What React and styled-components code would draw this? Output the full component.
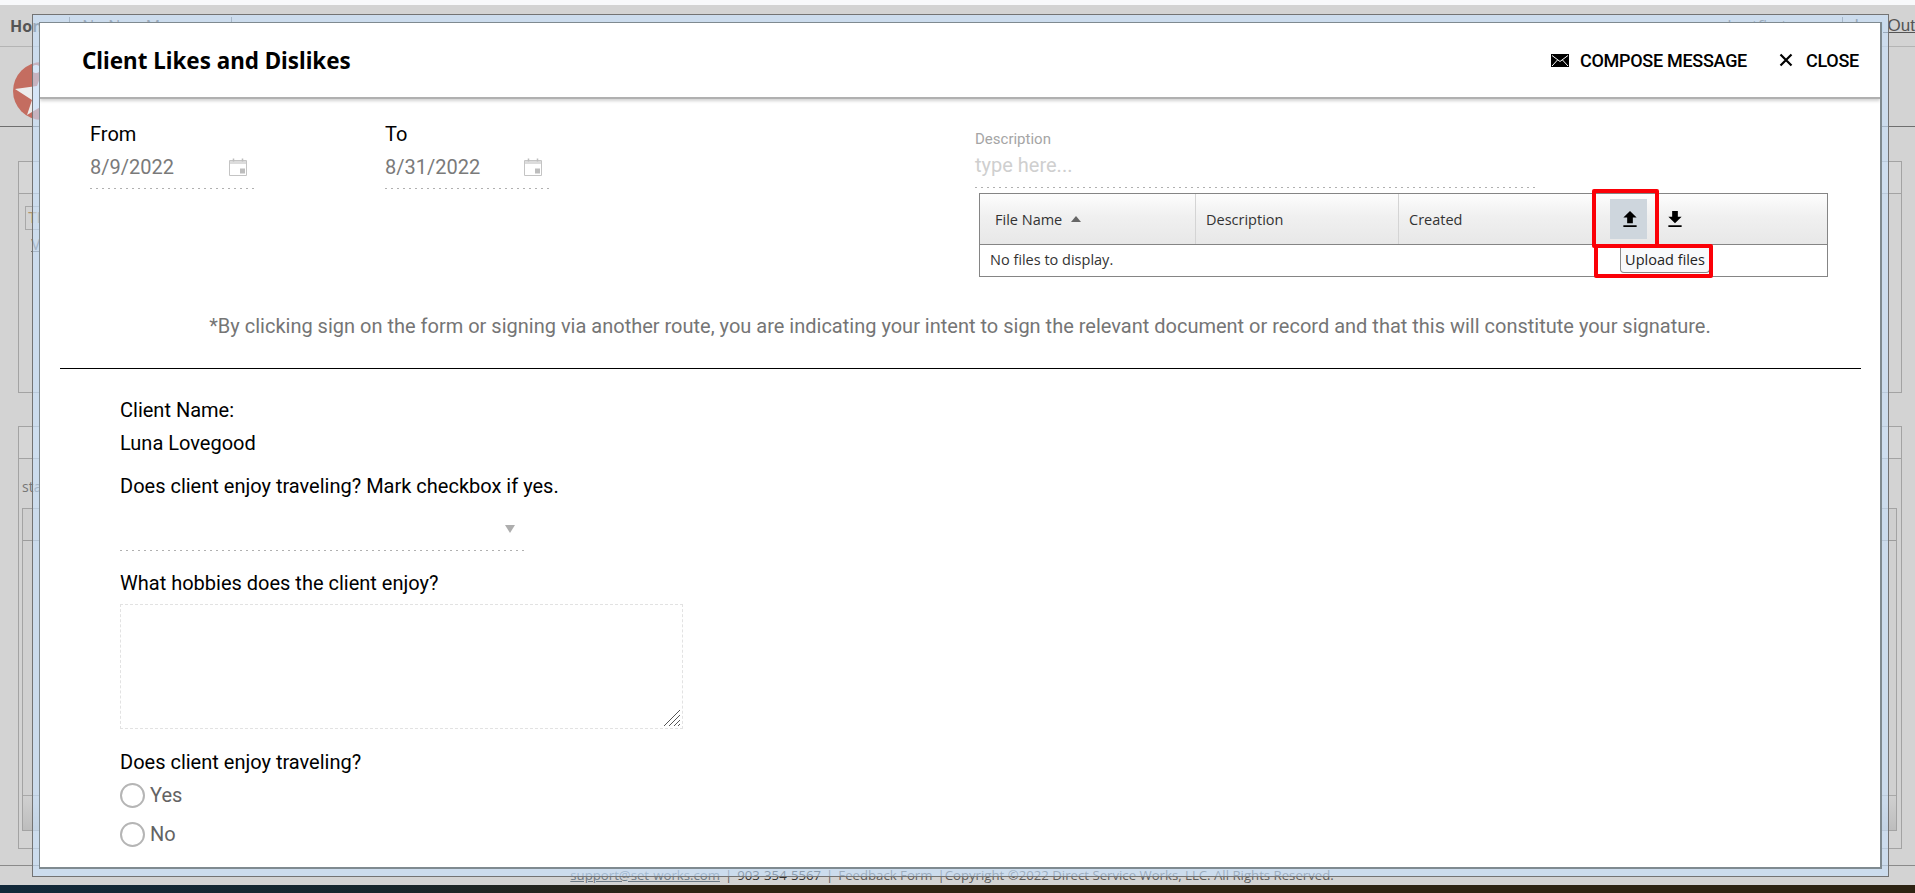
import React from "react";
import styled, { createGlobalStyle, css } from "styled-components";

const Global = createGlobalStyle`
  html, body { margin: 0; padding: 0; height: 100%; overflow: hidden; background: #d3d3d3; }
  body { font-family: Roboto, "Liberation Sans", sans-serif; }
  * { box-sizing: border-box; }
`;

const dottedBottom = css`
  background-image: linear-gradient(to right, #b0b0b0 2px, transparent 2px);
  background-size: 6px 1px;
  background-position: left bottom;
  background-repeat: repeat-x;
`;

const Page = styled.div`
  position: relative;
  width: 1915px;
  height: 893px;
  overflow: hidden;
  display: flex;
  flex-direction: column;
  background: #d3d3d3;
`;
const TopStrip = styled.div`height: 5px; background: #f8f9fb;`;
const Nav = styled.div`
  height: 42px;
  display: flex;
  align-items: center;
  justify-content: space-between;
  padding: 0 0 0 10px;
  border-bottom: 1px solid #b4b4b4;
  font-family: "Open Sans", sans-serif;
  font-size: 16px;
  color: #555;
`;
const NavGroup = styled.div`display: flex; align-items: center; gap: 12px;`;
const NavBold = styled.span`font-weight: 700;`;
const NavDivider = styled.span`width: 1px; height: 18px; background: #777;`;
const NavLink = styled.span`
  font-family: "Liberation Sans", sans-serif;
  font-size: 17px;
  color: #555;
  text-decoration: underline;
  white-space: nowrap;
`;
const Brand = styled.div`
  height: 80px;
  padding: 15px 0 0 13px;
  border-bottom: 1px solid #6f6f6f;
`;
const Main = styled.div`
  flex: 1;
  padding: 34px 13px 0 18px;
  display: flex;
  flex-direction: column;
  gap: 33px;
`;
const Panel = styled.div`
  height: ${p => p.$h}px;
  border: 1px solid #a3a3a3;
`;
const PanelHead = styled.div`
  height: ${p => p.$h}px;
  border-bottom: 1px solid #a3a3a3;
  background: #d6d6d6;
`;
const PanelBody = styled.div`padding: ${p => p.$pad};`;
const GhostInput = styled.div`
  width: 300px;
  height: 24px;
  border: 1px solid #a8a8a8;
  padding-left: 2px;
  font-size: 15px;
  line-height: 22px;
  color: #b0946c;
`;
const GhostLink = styled.div`
  margin: 6px 0 0 6px;
  font-size: 15px;
  color: #777;
  text-decoration: underline;
`;
const GhostLabel = styled.div`
  font-family: "Open Sans", sans-serif;
  font-size: 14px;
  color: #777;
  height: 49px;
  padding-top: 18px;
`;
const GhostGrid = styled.div`
  height: 323px;
  display: flex;
  flex-direction: column;
  border: 1px solid #a3a3a3;
`;
const GhostGridHead = styled.div`height: 32px; border-bottom: 1px solid #9c9c9c; background: #cfcfcf;`;
const GhostGridRows = styled.div`flex: 1; background: #d0d0d0;`;
const GhostGridFoot = styled.div`height: 35px; border-top: 1px solid #a8a8a8; background: linear-gradient(#d0d0d0, #bdbdbd);`;
const FooterBar = styled.div`
  height: 20px;
  border-top: 1px solid #8a8a8a;
  display: flex;
  align-items: center;
  justify-content: center;
  gap: 5px;
  padding: 0 11px 2px 0;
  font-family: "Open Sans", sans-serif;
  font-size: 13.2px;
  color: #5e5e5e;
  white-space: nowrap;
`;
const FootLink = styled.span`text-decoration: underline; color: #6d7a86;`;
const FootStrong = styled.span`color: #333;`;
const Ground = styled.div`
  height: 8px;
  background: linear-gradient(90deg, #12293a 0%, #17262c 20%, #2d2313 35%, #2d2313 100%);
`;

const Frame = styled.div`
  position: absolute;
  left: 32px;
  top: 14px;
  width: 1857px;
  height: 863px;
  padding: 7px 6px;
  border: 1px solid #737373;
  background: rgba(200, 226, 255, 0.6);
`;
const Dialog = styled.div`
  width: 100%;
  height: 100%;
  background: #fff;
  border: 1px solid #7f8a90;
  border-width: 1px 2px 2px 1px;
  overflow: hidden;
  display: flex;
  flex-direction: column;
`;
const Header = styled.header`
  flex: none;
  height: 76px;
  padding: 0 21px 0 42px;
  display: flex;
  align-items: center;
  justify-content: space-between;
  border-bottom: 2px solid #b0b0b0;
  box-shadow: 0 2px 3px rgba(0, 0, 0, 0.18);
`;
const Title = styled.h1`
  margin: 0;
  font-family: "Noto Sans", sans-serif;
  font-size: 22.4px;
  font-weight: 700;
  color: #000;
`;
const Actions = styled.div`display: flex; align-items: center; gap: 32px;`;
const Action = styled.button`
  display: flex;
  align-items: center;
  gap: ${p => p.$gap}px;
  padding: 0;
  border: 0;
  background: none;
  font-family: Roboto, sans-serif;
  font-size: 18px;
  font-weight: 500;
  color: #000;
  text-transform: uppercase;
  letter-spacing: -0.28px;
`;
const TopArea = styled.div`
  flex: none;
  display: flex;
  align-items: flex-start;
  padding: 23px 52px 0 50px;
`;
const Dates = styled.div`display: flex; gap: 131px;`;
const DateField = styled.div`width: 164px;`;
const FieldLabel = styled.div`font-size: 20px; line-height: 24px; color: #000;`;
const DateInput = styled.div`
  ${dottedBottom}
  height: 43px;
  display: flex;
  align-items: center;
  justify-content: space-between;
  padding: 0 7px 1px 0;
  font-size: 20px;
  color: #7a7a7a;
`;
const Files = styled.div`
  margin-left: auto;
  width: 853px;
  padding-top: 9px;
`;
const DescLabel = styled.div`font-size: 15px; line-height: 16px; color: #a5a5a5;`;
const DescInput = styled.div`
  ${dottedBottom}
  width: 561px;
  margin-top: 6px;
  height: 35px;
  font-size: 20px;
  line-height: 24px;
  color: #cfcfcf;
`;
const FileTable = styled.div`
  position: relative;
  margin: 5px 0 0 4px;
  width: 849px;
  height: 84px;
  border: 1px solid #858585;
  font-family: "Open Sans", Roboto, sans-serif;
  font-size: 14.5px;
  color: #333;
`;
const TableHead = styled.div`
  height: 51px;
  display: grid;
  grid-template-columns: 216px 203px 1fr;
  border-bottom: 1px solid #858585;
  background: linear-gradient(#fdfdfd, #f0f0f0 45%, #e8e8e8);
`;
const HeadCell = styled.div`
  display: flex;
  align-items: center;
  gap: 9px;
  padding-left: ${p => p.$pad}px;
  border-right: ${p => (p.$last ? "0" : "1px solid #d4d4d4")};
`;
const SortUp = styled.span`
  width: 0;
  height: 0;
  border-left: 5px solid transparent;
  border-right: 5px solid transparent;
  border-bottom: 6px solid #666;
`;
const TableTools = styled.div`
  position: absolute;
  left: 630px;
  top: 5px;
  display: flex;
  align-items: center;
  gap: 8px;
`;
const ToolBtn = styled.div`
  width: 37px;
  height: 40px;
  padding-left: 2px;
  display: flex;
  align-items: center;
  justify-content: center;
  background: ${p => (p.$active ? "#ced6dd" : "transparent")};
`;
const TableEmpty = styled.div`padding: 5px 0 0 10px; line-height: 20px;`;
const Tooltip = styled.div`
  position: absolute;
  left: 640px;
  top: 53px;
  width: 90px;
  height: 26px;
  display: flex;
  align-items: center;
  justify-content: center;
  background: #f8f9fb;
  border: 1px solid #8a8a8a;
  border-top: 0;
  border-radius: 0 0 4px 4px;
  color: #222;
  white-space: nowrap;
`;
const RedBox = styled.div`
  position: absolute;
  left: ${p => p.$l}px;
  top: ${p => p.$t}px;
  width: ${p => p.$w}px;
  height: ${p => p.$h}px;
  border: 4px solid #fb0007;
  border-radius: 2px;
`;
const Notice = styled.p`
  flex: none;
  margin: 37px 0 0;
  text-align: center;
  font-size: 20px;
  line-height: 24px;
  color: #757575;
`;
const Rule = styled.hr`
  flex: none;
  width: 1801px;
  margin: 30px 0 0 20px;
  border: 0;
  border-top: 1px solid #000;
`;
const Form = styled.div`
  flex: 1;
  padding: 29px 0 0 80px;
  font-size: 20px;
  color: #000;
`;
const Line = styled.div`
  line-height: 24px;
  margin-top: ${p => p.$mt || 0}px;
`;
const SelectBox = styled.div`
  ${dottedBottom}
  width: 405px;
  height: 53px;
  display: flex;
  align-items: flex-end;
  justify-content: flex-end;
  padding: 0 10px 18px 0;
`;
const SelectArrow = styled.span`
  width: 0;
  height: 0;
  border-left: 5px solid transparent;
  border-right: 5px solid transparent;
  border-top: 8px solid #aeaeae;
`;
const TextBox = styled.div`
  position: relative;
  width: 563px;
  height: 125px;
  margin-top: 9px;
  border: 1px dashed #e2e2e2;
`;
const Grip = styled.svg`
  position: absolute;
  right: 1px;
  bottom: 1px;
`;
const RadioRow = styled.label`
  display: flex;
  align-items: center;
  gap: 5px;
  height: 24px;
  margin-top: ${p => p.$mt}px;
  color: #636363;
`;
const RadioCircle = styled.span`
  width: 25px;
  height: 25px;
  border-radius: 50%;
  border: 2px solid #b5b5b5;
`;

const LogoMark = () => (
  <svg width="58" height="58" viewBox="0 0 58 58">
    <circle cx="29" cy="29" r="29" fill="#c46d60" />
    <polygon points="2,27 24,24 30,8 36,24 56,27 40,38 46,56 29,44 14,53 19,38" fill="#ececec" />
    <circle cx="23" cy="7" r="4" fill="#ececec" />
  </svg>
);
const Envelope = () => (
  <svg width="18" height="13" viewBox="0 0 18 13">
    <rect width="18" height="13" fill="#000" />
    <path d="M1 1.5 9 7.5 17 1.5M1 12 6.5 6M17 12 11.5 6" fill="none" stroke="#fff" strokeWidth="1" />
  </svg>
);
const CloseX = () => (
  <svg width="14" height="14" viewBox="0 0 14 14">
    <path d="M1.5 1.5 12.5 12.5M12.5 1.5 1.5 12.5" stroke="#000" strokeWidth="2.2" />
  </svg>
);
const Calendar = () => (
  <svg width="18" height="18" viewBox="0 0 18 18" fill="none">
    <path d="M.5 2.5h17v15H.5z" stroke="#c4c4c4" />
    <path d="M1 3h16v3H1z" fill="#dcdcdc" />
    <path d="M4.5 .5v3M13.5 .5v3" stroke="#bdbdbd" strokeWidth="1.5" />
    <path d="M11 10.5h5v5h-5z" fill="#bdbdbd" />
  </svg>
);
const Upload = () => (
  <svg width="18" height="18" viewBox="3 2 18 19"><path d="M9 16h6v-6h4l-7-7-7 7h4zm-4 2h14v2H5z" fill="#000" /></svg>
);
const Download = () => (
  <svg width="18" height="18" viewBox="3 2 18 19"><path d="M19 9h-4V3H9v6H5l7 7 7-7zM5 18v2h14v-2H5z" fill="#000" /></svg>
);

export default function App() {
  return (
    <Page>
      <Global />
      <TopStrip />
      <Nav>
        <NavGroup>
          <NavBold>Home</NavBold>
          <NavDivider />
          <span>No New Messages</span>
          <NavDivider />
        </NavGroup>
        <NavGroup>
          <span>Lastfirstname</span>
          <NavDivider />
          <NavLink>Log Out</NavLink>
        </NavGroup>
      </Nav>
      <Brand><LogoMark /></Brand>
      <Main>
        <Panel $h={232}>
          <PanelHead $h={32} />
          <PanelBody $pad="12px 0 0 6px">
            <GhostInput>Th</GhostInput>
            <GhostLink>V</GhostLink>
          </PanelBody>
        </Panel>
        <Panel $h={423}>
          <PanelHead $h={32} />
          <PanelBody $pad="0 4px 0 3px">
            <GhostLabel>status</GhostLabel>
            <GhostGrid>
              <GhostGridHead />
              <GhostGridRows />
              <GhostGridFoot />
            </GhostGrid>
          </PanelBody>
        </Panel>
      </Main>
      <FooterBar>
        <FootLink>support@set-works.com</FootLink>
        <span>|</span>
        <FootStrong>903-354-5567</FootStrong>
        <span>|</span>
        <span>Feedback Form</span>
        <span>|Copyright ©2022 Direct Service Works, LLC. All Rights Reserved.</span>
      </FooterBar>
      <Ground />

      <Frame>
        <Dialog>
          <Header>
            <Title>Client Likes and Dislikes</Title>
            <Actions>
              <Action $gap={11}><Envelope />Compose Message</Action>
              <Action $gap={13}><CloseX />Close</Action>
            </Actions>
          </Header>
          <TopArea>
            <Dates>
              <DateField>
                <FieldLabel>From</FieldLabel>
                <DateInput>8/9/2022<Calendar /></DateInput>
              </DateField>
              <DateField>
                <FieldLabel>To</FieldLabel>
                <DateInput>8/31/2022<Calendar /></DateInput>
              </DateField>
            </Dates>
            <Files>
              <DescLabel>Description</DescLabel>
              <DescInput>type here...</DescInput>
              <FileTable>
                <TableHead>
                  <HeadCell $pad={15}>File Name <SortUp /></HeadCell>
                  <HeadCell $pad={10}>Description</HeadCell>
                  <HeadCell $pad={10} $last>Created</HeadCell>
                </TableHead>
                <TableEmpty>No files to display.</TableEmpty>
                <TableTools>
                  <ToolBtn $active><Upload /></ToolBtn>
                  <ToolBtn><Download /></ToolBtn>
                </TableTools>
                <Tooltip>Upload files</Tooltip>
                <RedBox $l={612} $t={-5} $w={67} $h={59} />
                <RedBox $l={614} $t={50} $w={119} $h={34} />
              </FileTable>
            </Files>
          </TopArea>
          <Notice>*By clicking sign on the form or signing via another route, you are indicating your intent to sign the relevant document or record and that this will constitute your signature.</Notice>
          <Rule />
          <Form>
            <Line>Client Name:</Line>
            <Line $mt={9}>Luna Lovegood</Line>
            <Line $mt={19}>Does client enjoy traveling? Mark checkbox if yes.</Line>
            <SelectBox><SelectArrow /></SelectBox>
            <Line $mt={20}>What hobbies does the client enjoy?</Line>
            <TextBox>
              <Grip width="18" height="18" viewBox="0 0 18 18">
                <path d="M1 17 17 1M6 17 17 6M11 17 17 11M15 17 17 15" stroke="#555" strokeWidth="1" />
              </Grip>
            </TextBox>
            <Line $mt={21}>Does client enjoy traveling?</Line>
            <RadioRow $mt={9}><RadioCircle />Yes</RadioRow>
            <RadioRow $mt={15}><RadioCircle />No</RadioRow>
          </Form>
        </Dialog>
      </Frame>
    </Page>
  );
}
